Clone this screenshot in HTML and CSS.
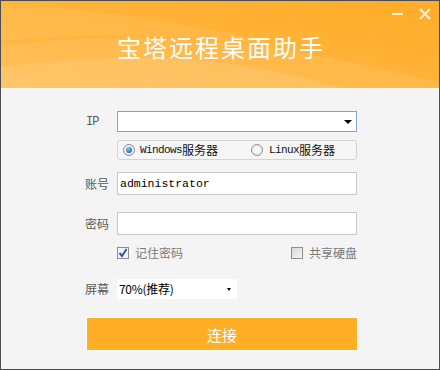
FILE: index.html
```html
<!DOCTYPE html>
<html lang="zh">
<head>
<meta charset="utf-8">
<title>宝塔远程桌面助手</title>
<link rel="stylesheet" href="styles.css">
</head>
<body>
<div class="window">
  <div class="header">
    <svg class="header-bg" width="438" height="87" viewBox="0 0 438 87" aria-hidden="true">
      <defs>
        <linearGradient id="hg" x1="0" y1="1" x2="1" y2="0">
          <stop offset="0" stop-color="#ffbb4c"/>
          <stop offset="1" stop-color="#ffac27"/>
        </linearGradient>
      </defs>
      <rect width="438" height="87" fill="url(#hg)"/>
      <path d="M0,4 C90,6 190,22 300,48 C200,34 100,30 0,40 Z" fill="#ffffff" opacity="0.07"/>
      <path d="M0,44 C120,30 260,34 438,82 L438,87 L0,87 Z" fill="#ffffff" opacity="0.08"/>
      <path d="M0,66 C110,52 220,50 340,87 L0,87 Z" fill="#ffffff" opacity="0.1"/>
    </svg>
    <div class="controls">
      <svg class="ctl" width="12" height="12" viewBox="0 0 12 12" aria-hidden="true"><rect x="0" y="5" width="11" height="2" fill="#fff3dc"/></svg>
      <svg class="ctl" width="12" height="12" viewBox="0 0 12 12" aria-hidden="true"><path d="M1,1 L11,11 M11,1 L1,11" stroke="#fff3dc" stroke-width="2"/></svg>
    </div>
    <h1 class="title">宝塔远程桌面助手</h1>
  </div>

  <div class="form">
    <div class="row row-ip">
      <span class="label mono">IP</span>
      <div class="field input input-focus">
        <span class="arrow big"></span>
      </div>
    </div>

    <div class="row row-radio">
      <span class="label"></span>
      <div class="field radio-box">
        <span class="radio-item r1"><span class="radio on"></span><span class="mono sm">Windows</span>服务器</span>
        <span class="radio-item r2"><span class="radio"></span><span class="mono sm">Linux</span>服务器</span>
      </div>
    </div>

    <div class="row row-user">
      <span class="label">账号</span>
      <div class="field input tall"><span class="mono val">administrator</span></div>
    </div>

    <div class="row row-pass">
      <span class="label">密码</span>
      <div class="field input tall"></div>
    </div>

    <div class="row row-check">
      <span class="label"></span>
      <div class="field checks">
        <span class="check-item"><span class="check on">
          <svg width="10" height="10" viewBox="0 0 10 10" aria-hidden="true"><path d="M1.5,5 L4,8 L8.5,1" stroke="#2f56b0" stroke-width="2" fill="none"/></svg>
        </span>记住密码</span>
        <span class="check-item"><span class="check"></span>共享硬盘</span>
      </div>
    </div>

    <div class="row row-screen">
      <span class="label">屏幕</span>
      <div class="select">70%(推荐)<span class="arrow small"></span></div>
    </div>

    <div class="row row-btn">
      <button class="connect">连接</button>
    </div>
  </div>
</div>
</body>
</html>
```

FILE: styles.css
```css
* { box-sizing: border-box; }
html, body { margin: 0; padding: 0; }
body {
  width: 440px;
  height: 370px;
  overflow: hidden;
  font-family: "Noto Sans CJK SC", "Liberation Sans", sans-serif;
  font-size: 12px;
}
.window {
  width: 440px;
  height: 370px;
  border: 1px solid #4c4c4c;
  background: #f4f4f4;
}
.header {
  position: relative;
  height: 87px;
  overflow: hidden;
  display: flex;
  justify-content: center;
}
.header-bg {
  position: absolute;
  left: 0;
  top: 0;
}
.controls {
  position: absolute;
  top: 7px;
  right: 8px;
  display: flex;
  gap: 15px;
}
.ctl { display: block; }
.title {
  position: relative;
  margin: 31px 0 0 2px;
  font-size: 24px;
  font-weight: 400;
  letter-spacing: 2px;
  line-height: 30px;
  color: #ffffff;
  height: 30px;
}
.form {
  padding-left: 84px;
  padding-top: 23px;
}
.row {
  display: flex;
  align-items: center;
}
.label {
  width: 32px;
  color: #5a5a5a;
  font-size: 12px;
  line-height: 14px;
}
.mono {
  font-family: "Liberation Mono", "DejaVu Sans Mono", monospace;
}
.label.mono { font-size: 12px; padding-left: 1px; letter-spacing: -1px; }
.field { width: 240px; }
.input {
  position: relative;
  height: 21px;
  background: #ffffff;
  border: 1px solid #c8c8c8;
  display: flex;
  align-items: center;
}
.input-focus { border-color: #7fa6d6; }
.input.tall { height: 23px; }
.val {
  font-size: 11.5px;
  color: #000;
  padding-left: 2px;
}
.arrow {
  position: absolute;
  width: 0;
  height: 0;
  border-style: solid;
  border-color: #000 transparent transparent transparent;
}
.arrow.big {
  right: 4px;
  top: 8px;
  border-width: 4px 4px 0 4px;
}
.row-radio { margin-top: 8px; }
.radio-box {
  height: 20px;
  border: 1px solid #d4d4d4;
  border-radius: 3px;
  background: #f6f6f6;
  display: flex;
  align-items: center;
  color: #111;
  font-size: 12px;
}
.radio-item {
  display: flex;
  align-items: center;
  line-height: 14px;
}
.r1 { margin-left: 5px; }
.r2 { margin-left: 33px; }
.sm { font-size: 11px; letter-spacing: -0.6px; }
.radio {
  width: 12px;
  height: 12px;
  border-radius: 50%;
  border: 1px solid #8f8f8f;
  background: radial-gradient(circle, #ffffff 0, #e2e2e2 100%);
  margin-right: 5px;
  position: relative;
}
.r2 .radio { margin-right: 6px; }
.radio.on::after {
  content: "";
  position: absolute;
  left: 2px;
  top: 2px;
  width: 6px;
  height: 6px;
  border-radius: 50%;
  background: radial-gradient(circle at 40% 35%, #7fd0ff 0, #1a6fc0 70%, #0d4a92 100%);
}
.row-user { margin-top: 12px; }
.row-pass { margin-top: 17px; }
.row-check { margin-top: 12px; }
.checks {
  display: flex;
  justify-content: space-between;
  height: 12px;
  align-items: center;
  color: #7a7a7a;
  font-size: 12px;
}
.check-item {
  display: flex;
  align-items: center;
  line-height: 12px;
}
.check {
  width: 12px;
  height: 12px;
  border: 1px solid #8e8e8e;
  background: linear-gradient(135deg, #d6d6d6, #f6f6f6);
  margin-right: 6px;
  display: flex;
  align-items: center;
  justify-content: center;
}
.check.on { background: #f4f4f4; }
.check svg { display: block; }
.row-screen { margin-top: 20px; }
.select {
  position: relative;
  width: 120px;
  height: 20px;
  background: #ffffff;
  color: #000;
  font-size: 12px;
  line-height: 20px;
  padding-left: 2px;
  letter-spacing: -0.3px;
}
.arrow.small {
  right: 6px;
  top: 9px;
  border-width: 3px 2.5px 0 2.5px;
}
.row-btn { margin-top: 19px; }
.connect {
  margin-left: 2px;
  width: 270px;
  height: 32px;
  border: none;
  background: #ffae26;
  box-shadow: 0 0 0 1px #ffffff;
  color: #ffffff;
  font-family: "Noto Sans CJK SC", sans-serif;
  font-size: 15px;
  padding: 0;
}
```
